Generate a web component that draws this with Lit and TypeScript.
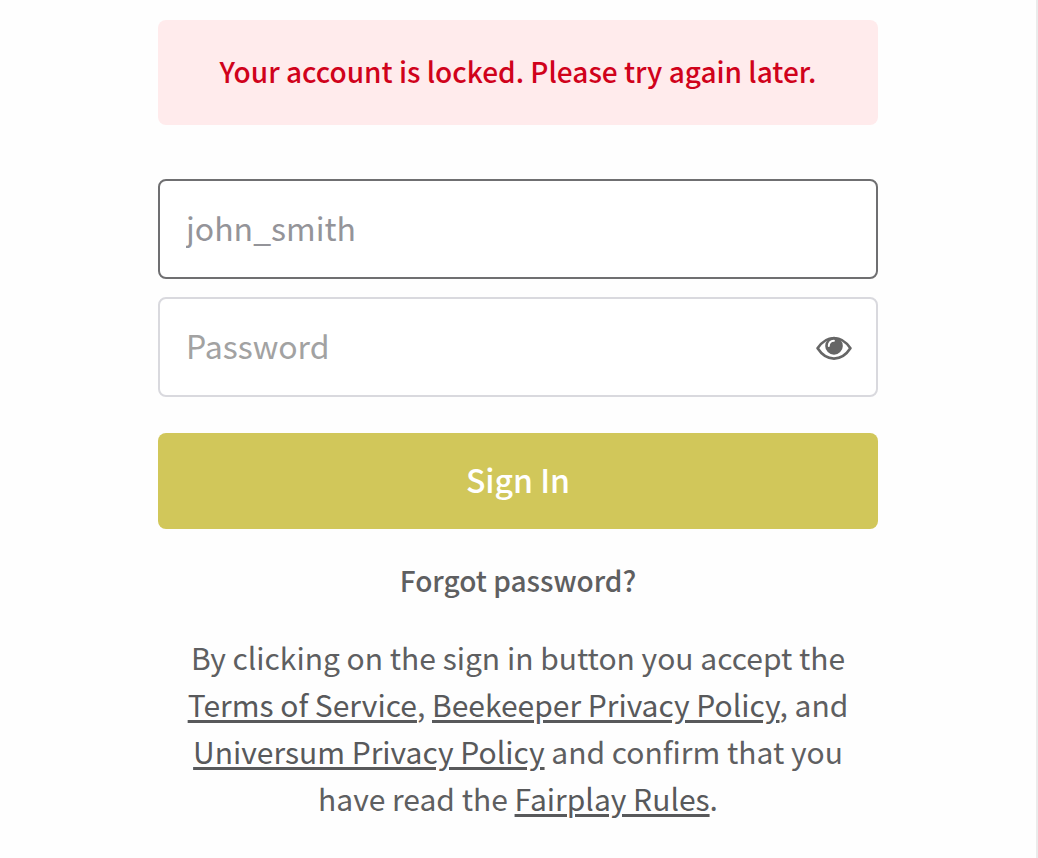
import { LitElement, html, css } from "lit";
import { customElement, state } from "lit/decorators.js";

@customElement("app-root")
export class AppRoot extends LitElement {
  @state() private revealed = false;

  static styles = css`
    :host {
      display: block;
      box-sizing: border-box;
      min-height: 100vh;
      padding: 20px 24px;
      border-right: 2px solid #ebebeb;
      background: #fefefe;
      color: #5e5f61;
      font-family: "Noto Sans CJK SC", "Noto Sans", sans-serif;
      font-size: 30px;
    }
    *, *::before, *::after { box-sizing: border-box; }
    .login {
      display: flex;
      flex-direction: column;
      max-width: 720px;
      margin: 0 auto;
      text-align: center;
    }
    .alert {
      padding: 28px 24px 30px;
      border-radius: 8px;
      background: #ffebec;
      color: #d0021b;
      font-size: 28px;
      font-weight: 500;
      line-height: 47px;
    }
    .form {
      display: flex;
      flex-direction: column;
      margin-top: 54px;
    }
    .field {
      display: flex;
      align-items: center;
      height: 100px;
      padding: 0 24px 0 26px;
      border: 2px solid #d9d9de;
      border-radius: 8px;
      background: #ffffff;
    }
    .field.active { border-color: #6f6f71; }
    .field + .field { margin-top: 18px; }
    .label {
      position: absolute;
      width: 1px;
      height: 1px;
      overflow: hidden;
      clip-path: inset(50%);
    }
    .input {
      flex: 1;
      min-width: 0;
      height: 100%;
      padding: 0 0 4px;
      border: 0;
      outline: none;
      background: transparent;
      color: #949499;
      font: inherit;
      font-size: 32px;
    }
    .input::placeholder { color: #a2a2a2; opacity: 1; }
    .reveal {
      display: flex;
      padding: 0;
      border: 0;
      background: none;
      color: #666666;
      cursor: pointer;
    }
    .eye { display: block; width: 36px; height: 26px; }
    .submit {
      height: 96px;
      margin-top: 36px;
      padding: 0 0 4px;
      border: 0;
      border-radius: 8px;
      background: #d1c75a;
      color: #ffffff;
      font: inherit;
      font-size: 32px;
      font-weight: 500;
      cursor: pointer;
    }
    .forgot {
      align-self: center;
      margin-top: 28px;
      color: #5e5f61;
      font-size: 28px;
      font-weight: 500;
      line-height: 47px;
      text-decoration: none;
    }
    .terms { margin: 30px 0 0; line-height: 47px; }
    .terms a {
      color: #58595b;
      text-decoration-thickness: 3px;
      text-underline-offset: 3px;
    }
  `;

  render() {
    return html`
      <main class="login">
        <div class="alert" role="alert">Your account is locked. Please try again later.</div>
        <form class="form" @submit=${(e: Event) => e.preventDefault()}>
          <div class="field active">
            <label class="label" for="username">Username</label>
            <input class="input" id="username" type="text" autocomplete="username" spellcheck="false" .value=${"john_smith"} />
          </div>
          <div class="field">
            <label class="label" for="password">Password</label>
            <input class="input" id="password" type=${this.revealed ? "text" : "password"} placeholder="Password" autocomplete="current-password" />
            <button class="reveal" type="button" aria-label="Show password" @click=${() => (this.revealed = !this.revealed)}>
              <svg class="eye" viewBox="0 -2 36 26" aria-hidden="true">
                <path d="M1.6 12.3C6 5.6 11.5 2 18 2S30 5.6 34.4 12.3C30 19 24.5 22.6 18 22.6S6 19 1.6 12.3Z" fill="none" stroke="currentColor" stroke-width="2.7" stroke-linejoin="round" />
                <circle cx="18" cy="9.9" r="8.8" fill="currentColor" />
                <path d="M12.8 10C12.8 7.2 14.8 5 17.9 4.8" fill="none" stroke="#ffffff" stroke-width="2" stroke-linecap="round" />
              </svg>
            </button>
          </div>
          <button class="submit" type="submit">Sign In</button>
        </form>
        <a class="forgot" href="#forgot">Forgot password?</a>
        <p class="terms">
          By clicking on the sign in button you accept the
          <a href="#terms">Terms of Service</a>, <a href="#beekeeper-privacy">Beekeeper Privacy Policy</a>, and
          <a href="#universum-privacy">Universum Privacy Policy</a> and confirm that you have read the
          <a href="#fairplay">Fairplay Rules</a>.
        </p>
      </main>
    `;
  }
}
